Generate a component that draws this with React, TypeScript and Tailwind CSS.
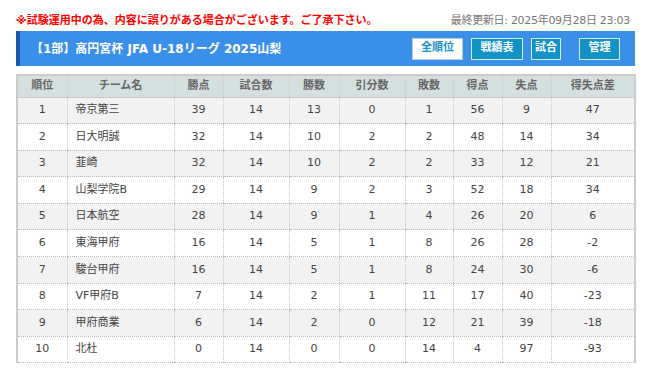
import React from 'react';

type Row = {
  rank: number;
  team: string;
  pts: number;
  played: number;
  win: number;
  draw: number;
  lose: number;
  gf: number;
  ga: number;
  gd: number;
};

const rows: Row[] = [
  { rank: 1, team: '帝京第三', pts: 39, played: 14, win: 13, draw: 0, lose: 1, gf: 56, ga: 9, gd: 47 },
  { rank: 2, team: '日大明誠', pts: 32, played: 14, win: 10, draw: 2, lose: 2, gf: 48, ga: 14, gd: 34 },
  { rank: 3, team: '韮崎', pts: 32, played: 14, win: 10, draw: 2, lose: 2, gf: 33, ga: 12, gd: 21 },
  { rank: 4, team: '山梨学院B', pts: 29, played: 14, win: 9, draw: 2, lose: 3, gf: 52, ga: 18, gd: 34 },
  { rank: 5, team: '日本航空', pts: 28, played: 14, win: 9, draw: 1, lose: 4, gf: 26, ga: 20, gd: 6 },
  { rank: 6, team: '東海甲府', pts: 16, played: 14, win: 5, draw: 1, lose: 8, gf: 26, ga: 28, gd: -2 },
  { rank: 7, team: '駿台甲府', pts: 16, played: 14, win: 5, draw: 1, lose: 8, gf: 24, ga: 30, gd: -6 },
  { rank: 8, team: 'VF甲府B', pts: 7, played: 14, win: 2, draw: 1, lose: 11, gf: 17, ga: 40, gd: -23 },
  { rank: 9, team: '甲府商業', pts: 6, played: 14, win: 2, draw: 0, lose: 12, gf: 21, ga: 39, gd: -18 },
  { rank: 10, team: '北杜', pts: 0, played: 14, win: 0, draw: 0, lose: 14, gf: 4, ga: 97, gd: -93 },
];

const headers = ['順位', 'チーム名', '勝点', '試合数', '勝数', '引分数', '敗数', '得点', '失点', '得失点差'];
const widths = [50, 107, 49, 66, 50, 66, 48, 49, 49, 84];

export default function App() {
  return (
    <div
      className="w-[648px] h-[378px] bg-white text-[#444] overflow-hidden"
      style={{ fontFamily: '"DejaVu Sans", "Noto Sans CJK JP", sans-serif' }}
    >
      {/* notice row */}
      <div className="flex items-center justify-between pl-[16px] pr-[18px] pt-[12px] h-[31px]">
        <p className="text-[11px] font-bold text-[#ff0000]">
          ※試験運用中の為、内容に誤りがある場合がございます。ご了承下さい。
        </p>
        <p className="text-[11px] text-[#777] tracking-[-0.3px]">最終更新日: 2025年09月28日 23:03</p>
      </div>

      {/* title bar */}
      <div className="mx-[16px] w-[619px] h-[35px] flex items-center bg-[#3a8fe8] border-l-[4px] border-[#1a5aa6] pl-[11px] pr-[15px]">
        <h1 className="text-[12px] font-bold text-white flex-1">【1部】高円宮杯 JFA U-18リーグ 2025山梨</h1>
        <button className="w-[51px] h-[22px] bg-white border border-[#b8c8d8] text-[11px] font-bold text-[#1990c8]">
          全順位
        </button>
        <button className="ml-[8px] w-[52px] h-[22px] bg-[#1193c6] border border-[#d8ecf6] text-[11px] font-bold text-white">
          戦績表
        </button>
        <button className="ml-[8px] w-[30px] h-[22px] bg-[#1193c6] border border-[#d8ecf6] text-[11px] font-bold text-white">
          試合
        </button>
        <button className="ml-[18px] w-[41px] h-[22px] bg-[#1193c6] border border-[#d8ecf6] text-[11px] font-bold text-white">
          管理
        </button>
      </div>

      {/* standings */}
      <table className="ml-[16px] mt-[8px] w-[619px] table-fixed border-collapse text-[11px]">
        <colgroup>
          {widths.map((w, i) => (
            <col key={i} style={{ width: w }} />
          ))}
        </colgroup>
        <thead>
          <tr className="h-[22px] bg-[#d4e0e0]">
            {headers.map((h, i) => (
              <th
                key={h}
                className={`font-bold text-[#666] border-t-2 border-t-[#ccc] border-b border-b-[#c8c8c8] ${
                  i === 0 ? 'border-l-2 border-l-[#ccc]' : 'border-l border-l-[#c8c8c8]'
                } ${i === headers.length - 1 ? 'border-r-2 border-r-[#ccc]' : ''}`}
                style={{ borderLeftStyle: i === 0 ? 'solid' : 'dotted' }}
              >
                {h}
              </th>
            ))}
          </tr>
        </thead>
        <tbody>
          {rows.map((r, idx) => {
            const cells = [r.rank, r.team, r.pts, r.played, r.win, r.draw, r.lose, r.gf, r.ga, r.gd];
            return (
              <tr key={r.rank} className={`h-[26.6px] ${idx % 2 === 0 ? 'bg-[#f2f2f2]' : 'bg-white'}`}>
                {cells.map((c, i) => (
                  <td
                    key={i}
                    className={`border-b border-dotted border-b-[#bbb] ${
                      i === 0 ? 'border-l-2 border-l-[#ccc]' : 'border-l border-l-[#c4c4c4]'
                    } ${i === cells.length - 1 ? 'border-r-2 border-r-[#ccc]' : ''} ${
                      i === 1 ? 'text-left pl-[8px]' : 'text-center'
                    }`}
                    style={i === 0 ? { borderLeftStyle: 'solid' } : i === cells.length - 1 ? { borderRightStyle: 'solid' } : undefined}
                  >
                    {c}
                  </td>
                ))}
              </tr>
            );
          })}
        </tbody>
      </table>
    </div>
  );
}
